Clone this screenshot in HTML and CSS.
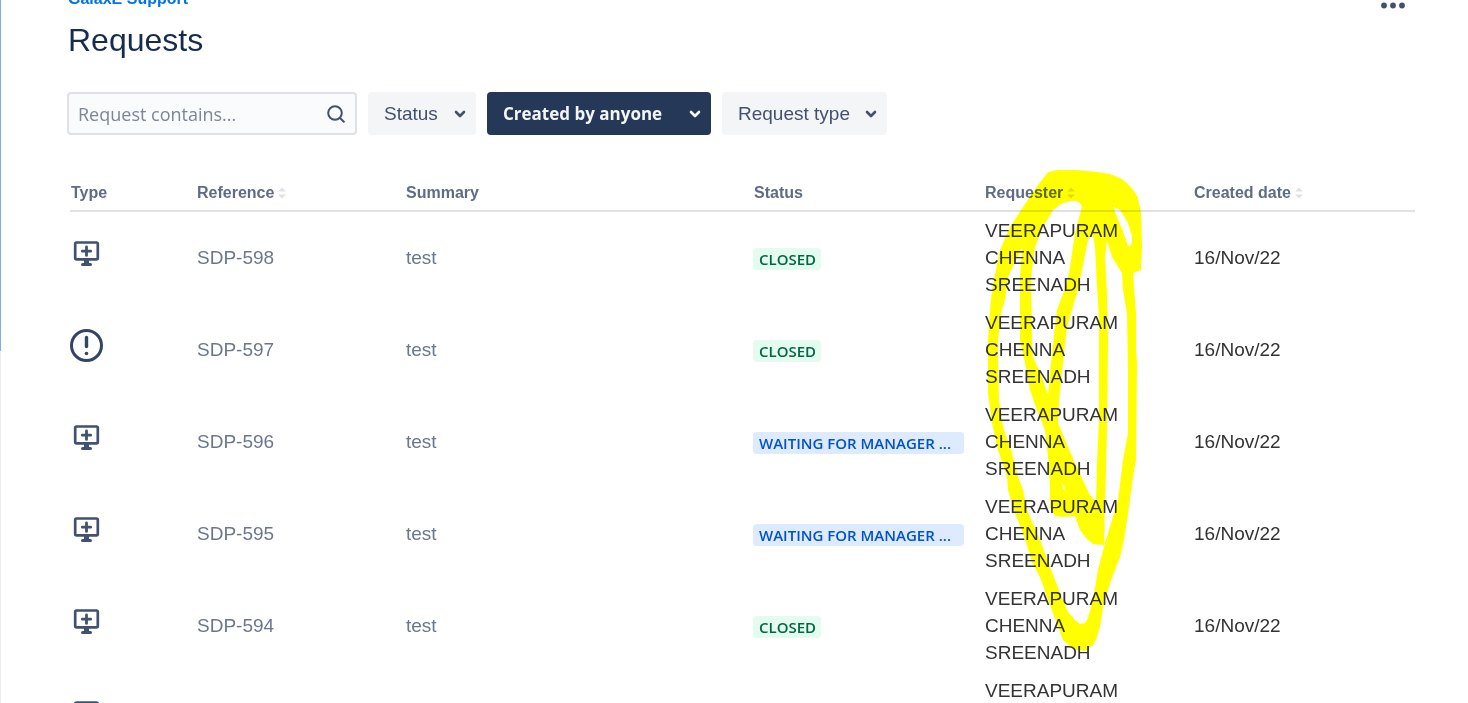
FILE: index.html
```html
<!DOCTYPE html>
<html lang="en">
<head>
    <meta charset="UTF-8">
    <meta name="viewport" content="width=device-width, initial-scale=1.0">
    <title>Requests</title>
    <link rel="stylesheet" href="styles.css">
</head>
<body>
    <!-- shared icons -->
    <svg class="icon-defs" aria-hidden="true">
        <symbol id="monitor" viewBox="0 0 34 34">
            <rect x="5.2" y="5.5" width="22.6" height="16.8" rx="1.4" fill="none" stroke="currentColor" stroke-width="2.7"/>
            <path d="M16.5 10v8.400M12.300 14.200h8.400" fill="none" stroke="currentColor" stroke-width="2.8" stroke-linecap="round"/>
            <path d="M14 23h5v3h1.500a1.500 1.500 0 0 1 0 3h-8a1.500 1.500 0 0 1 0-3h1.500z" fill="currentColor"/>
        </symbol>
        <symbol id="incident" viewBox="0 0 34 34">
            <circle cx="16.5" cy="16.5" r="15" fill="none" stroke="currentColor" stroke-width="3"/>
            <path d="M16.5 8.500v9" stroke="currentColor" stroke-width="3.4" stroke-linecap="round"/>
            <circle cx="16.5" cy="24.500" r="1.8" fill="currentColor"/>
        </symbol>
        <symbol id="chevron" viewBox="0 0 14 10">
            <path d="M3 3l4 4 4-4" fill="none" stroke="currentColor" stroke-width="2.600" stroke-linecap="round" stroke-linejoin="round"/>
        </symbol>
        <symbol id="sort" viewBox="0 0 8 12">
            <path d="M0 4.500L4 .5l4 4zM0 7.500h8l-4 4z" fill="currentColor"/>
        </symbol>
    </svg>

    <main class="page">
        <div class="topbar">
            <a href="#" class="portal-link">GalaxE Support</a>
            <button type="button" class="more-btn" aria-label="More actions">
                <svg width="26" height="8" viewBox="0 0 26 8" fill="currentColor">
                    <circle cx="4" cy="3.500" r="2.900"/>
                    <circle cx="13" cy="3.500" r="2.900"/>
                    <circle cx="22" cy="3.500" r="2.900"/>
                </svg>
            </button>
        </div>
        <h1>Requests</h1>

        <form class="filters">
            <div class="search">
                <input type="text" aria-label="Request contains" placeholder="Request contains...">
                <svg class="search-icon" width="18" height="18" viewBox="0 0 18 18" fill="none" stroke="currentColor" stroke-width="2" stroke-linecap="round">
                    <circle cx="8" cy="8" r="6.800"/>
                    <path d="M13 13L16.800 16.800"/>
                </svg>
            </div>
            <div class="filter status-filter">
                <select aria-label="Status"><option>Status</option></select>
                <svg class="chevron"><use href="#chevron"/></svg>
            </div>
            <div class="filter creator-filter">
                <select aria-label="Created by"><option>Created by anyone</option></select>
                <svg class="chevron"><use href="#chevron"/></svg>
            </div>
            <div class="filter type-filter">
                <select aria-label="Request type"><option>Request type</option></select>
                <svg class="chevron"><use href="#chevron"/></svg>
            </div>
        </form>

        <table class="requests">
            <thead>
                <tr>
                    <th class="col-type">Type</th>
                    <th class="col-reference"><button type="button">Reference<svg class="sort"><use href="#sort"/></svg></button></th>
                    <th>Summary</th>
                    <th class="col-status">Status</th>
                    <th class="col-requester">
                        <button type="button">Requester<svg class="sort"><use href="#sort"/></svg></button>
                        <!-- highlighter marks over the requester names -->
                        <svg class="marker" viewBox="985 165 160 490" aria-hidden="true">
                            <path fill="#ff0" fill-rule="evenodd" d="
                                M1048 172L1058 170L1077 170L1098 172L1110 174L1120 178L1127 183L1134 191L1138 198L1141 213L1142 247L1141 270L1133 273L1134 287L1136 313L1136 350L1137 363L1136 460L1133 477L1129 507L1124 540L1120 557L1110 583L1103 607L1100 627L1096 640L1093 645L1085 651L1073 649L1063 640L1055 618L1047 597L1040 577L1032 562L1023 533L1015 513L1008 490L1007 477L998 450L992 423L988 393L988 340L990 310L992 290L1000 250L1010 227L1023 207L1038 185Z
                                M1022 247L1020 277L1020 340L1025 363L1030 390L1037 410L1045 430L1048 457L1050 487L1050 507L1055 516L1063 517L1075 516L1080 530L1086 538L1093 544L1104 545L1105 507L1107 430L1108 340L1107 293L1105 257L1107 240L1112 257L1122 273L1123 290L1127 313L1128 370L1128 433L1123 460L1118 500L1115 510L1105 543L1098 570L1093 600L1088 618L1085 623L1080 624L1075 620L1068 612L1060 593L1050 567L1040 540L1027 510L1023 490L1018 477L1012 453L1003 427L999 400L998 363L998 340L1001 313L1005 300L1008 277Z
                                M1080 203L1076 201L1070 201L1061 204L1053 210L1043 227L1035 247L1031 277L1032 340L1033 357L1042 377L1048 395L1050 373L1054 335L1057 310L1067 283L1070 267L1075 233L1082 207Z
                                M1092 231L1095 247L1097 287L1099 317L1099 420L1097 463L1096 502L1090 495L1078 470L1068 447L1058 423L1059 400L1063 363L1067 327L1077 293L1082 270L1088 240Z
                                M1113 207L1120 210L1128 223L1132 236L1132 244L1128 246L1126 240L1122 229Z
                                M1062 484L1064 485L1065 491L1063 489Z"/>
                        </svg>
                    </th>
                    <th class="col-created"><button type="button">Created date<svg class="sort"><use href="#sort"/></svg></button></th>
                </tr>
            </thead>
            <tbody>
                <tr>
                    <td><svg class="type-icon"><use href="#monitor"/></svg></td>
                    <td><a href="#">SDP-598</a></td>
                    <td><a href="#">test</a></td>
                    <td><span class="badge closed">CLOSED</span></td>
                    <td class="requester">VEERAPURAM CHENNA SREENADH</td>
                    <td>16/Nov/22</td>
                </tr>
                <tr>
                    <td><svg class="type-icon incident"><use href="#incident"/></svg></td>
                    <td><a href="#">SDP-597</a></td>
                    <td><a href="#">test</a></td>
                    <td><span class="badge closed">CLOSED</span></td>
                    <td class="requester">VEERAPURAM CHENNA SREENADH</td>
                    <td>16/Nov/22</td>
                </tr>
                <tr>
                    <td><svg class="type-icon"><use href="#monitor"/></svg></td>
                    <td><a href="#">SDP-596</a></td>
                    <td><a href="#">test</a></td>
                    <td><span class="badge waiting">WAITING FOR MANAGER ...</span></td>
                    <td class="requester">VEERAPURAM CHENNA SREENADH</td>
                    <td>16/Nov/22</td>
                </tr>
                <tr>
                    <td><svg class="type-icon"><use href="#monitor"/></svg></td>
                    <td><a href="#">SDP-595</a></td>
                    <td><a href="#">test</a></td>
                    <td><span class="badge waiting">WAITING FOR MANAGER ...</span></td>
                    <td class="requester">VEERAPURAM CHENNA SREENADH</td>
                    <td>16/Nov/22</td>
                </tr>
                <tr>
                    <td><svg class="type-icon"><use href="#monitor"/></svg></td>
                    <td><a href="#">SDP-594</a></td>
                    <td><a href="#">test</a></td>
                    <td><span class="badge closed">CLOSED</span></td>
                    <td class="requester">VEERAPURAM CHENNA SREENADH</td>
                    <td>16/Nov/22</td>
                </tr>
                <tr>
                    <td><svg class="type-icon"><use href="#monitor"/></svg></td>
                    <td></td>
                    <td></td>
                    <td></td>
                    <td class="requester">VEERAPURAM CHENNA SREENADH</td>
                    <td></td>
                </tr>
            </tbody>
        </table>
    </main>
</body>
</html>
```

FILE: styles.css
```css
* {
    box-sizing: border-box;
}

html {
    height: 100%;
}

body {
    margin: 0;
    height: 100%;
    overflow: hidden;
    background: linear-gradient(#7eb0e6 351px, #ebecf0 351px) left top / 1px 100% no-repeat #fff;
    font-family: "Liberation Sans", Arial, sans-serif;
    font-size: 19px;
    line-height: 27px;
    color: #333;
}

a {
    color: #6b778c;
    text-decoration: none;
}

a:hover {
    text-decoration: underline;
}

.icon-defs {
    position: absolute;
    width: 0;
    height: 0;
}

/* page header, scrolled slightly under the top edge */
.page {
    margin-top: -12px;
    padding: 0 53px 0 67px;
}

.topbar {
    display: flex;
    justify-content: space-between;
    height: 32px;
    padding-left: 1px;
}

.portal-link {
    font-size: 16px;
    font-weight: bold;
    line-height: 22px;
    color: #0073e6;
}

.more-btn {
    display: flex;
    align-items: flex-end;
    height: 22px;
    margin-right: 9px;
    padding: 0;
    border: none;
    background: none;
    color: #42526e;
    cursor: pointer;
}

h1 {
    margin: 0;
    padding-left: 1px;
    font-size: 32px;
    font-weight: normal;
    line-height: 40px;
    color: #172b4d;
}

/* filters */
.filters {
    display: flex;
    gap: 11px;
    margin-top: 32px;
}

.search,
.filter {
    position: relative;
    height: 43px;
}

.search {
    width: 290px;
}

.search input {
    width: 100%;
    height: 100%;
    padding: 0 44px 0 9px;
    border: 2px solid #dfe1e6;
    border-radius: 4px;
    background-color: #fafbfc;
    font-family: "Open Sans", "Noto Sans", sans-serif;
    font-size: 18px;
    color: #172b4d;
}

.search input::placeholder {
    color: #7a869a;
}

.search-icon {
    position: absolute;
    right: 12px;
    top: 13px;
    color: #42526e;
}

.filter select {
    appearance: none;
    width: 100%;
    height: 100%;
    padding: 0 36px 0 16px;
    border: none;
    border-radius: 4px;
    background-color: #f4f5f7;
    font-family: inherit;
    font-size: 19px;
    color: #42526e;
    cursor: pointer;
}

.status-filter {
    width: 108px;
}

.creator-filter {
    width: 224px;
}

.type-filter {
    width: 165px;
}

.filter .chevron {
    position: absolute;
    right: 9px;
    top: 17px;
    width: 14px;
    height: 10px;
    color: #42526e;
    pointer-events: none;
}

.creator-filter select {
    background-color: #253858;
    font-family: "Open Sans", "Noto Sans", sans-serif;
    font-size: 17px;
    font-weight: bold;
    color: #f4f5f7;
}

.creator-filter .chevron {
    color: #f4f5f7;
}

/* table */
.requests {
    width: calc(100% - 3px);
    margin: 38px 0 0 3px;
    border-collapse: separate;
    border-spacing: 0;
    table-layout: fixed;
}

.requests th {
    height: 39px;
    padding: 2px 0 0;
    border-bottom: 2px solid #dfe1e6;
    text-align: left;
    font-size: 16px;
    line-height: 20px;
    color: #5e6c84;
}

.requests th button {
    display: flex;
    align-items: center;
    gap: 4px;
    padding: 0;
    border: none;
    background: none;
    font: inherit;
    color: inherit;
    cursor: pointer;
}

.requests td {
    height: 92px;
    padding: 5px 0 6px;
}

.requests .requester {
    padding-right: 24px;
}

.requests .col-type {
    width: 127px;
    padding-left: 1px;
}

.col-reference {
    width: 209px;
}

.col-status {
    width: 231px;
}

.col-requester {
    position: relative;
    width: 209px;
}

.col-created {
    width: 221px;
}

.sort {
    width: 8px;
    height: 12px;
    color: #dfe1e6;
}

.marker {
    position: absolute;
    left: 0;
    top: -8px;
    width: 160px;
    height: 490px;
    mix-blend-mode: multiply;
    pointer-events: none;
}

.type-icon {
    display: block;
    width: 34px;
    height: 34px;
    margin-bottom: 7px;
    color: #42526e;
}

.type-icon.incident {
    color: #344563;
}

.badge {
    display: block;
    width: fit-content;
    max-width: 211px;
    margin: 2px 0 0 -1px;
    padding: 0 5px 0 6px;
    border-radius: 4px;
    font-family: "Open Sans", "Noto Sans", sans-serif;
    font-size: 15px;
    font-weight: 600;
    line-height: 22px;
    white-space: nowrap;
}

.closed {
    background-color: #e3fcef;
    color: #006644;
}

.waiting {
    width: 211px;
    background-color: #deebff;
    color: #0052cc;
}
```
